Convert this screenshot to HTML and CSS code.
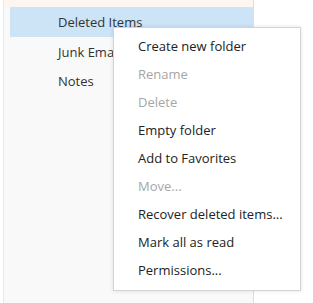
FILE: index.html
```html
<!DOCTYPE html>
<html lang="en">
<head>
    <meta charset="UTF-8">
    <title>Folder menu</title>
    <link rel="stylesheet" href="styles.css">
</head>
<body>
    <div class="page">
        <div class="pane">
            <div class="pane-top"></div>
            <ul class="folders">
                <li class="folder selected">Deleted Items</li>
                <li class="folder">Junk Email</li>
                <li class="folder">Notes</li>
            </ul>
        </div>

        <ul class="menu">
            <li class="menu-item">Create new folder</li>
            <li class="menu-item disabled">Rename</li>
            <li class="menu-item disabled">Delete</li>
            <li class="menu-item">Empty folder</li>
            <li class="menu-item">Add to Favorites</li>
            <li class="menu-item disabled">Move...</li>
            <li class="menu-item">Recover deleted items...</li>
            <li class="menu-item">Mark all as read</li>
            <li class="menu-item">Permissions...</li>
        </ul>
    </div>
</body>
</html>
```

FILE: styles.css
```css
body {
    margin: 0;
    background: #ffffff;
    font-family: 'Open Sans', 'Noto Sans', sans-serif;
    font-size: 13px;
}

.page {
    position: relative;
    height: 303px;
    overflow: hidden;
}

.pane {
    margin-left: 3px;
    width: 243px;
    height: 303px;
    background: #f9f9f9;
    border-left: 1px solid #efe9e4;
    border-right: 1px solid #dedede;
    padding-left: 6px;
}

.pane-top {
    height: 7px;
    background: #fdf6f0;
    margin-left: -6px;
}

.folders {
    list-style: none;
    margin: 0;
    padding: 0;
}

.folder {
    height: 29.5px;
    line-height: 30px;
    padding-left: 48px;
    color: #333333;
    white-space: nowrap;
}

.folder.selected {
    background: #cde4f7;
}

.menu {
    position: absolute;
    left: 113px;
    top: 27px;
    width: 186px;
    height: 254px;
    margin: 0;
    padding: 4px 0 4px 0;
    list-style: none;
    background: #ffffff;
    border: 1px solid #d4d4d4;
    box-shadow: 0 0 4px rgba(0, 0, 0, 0.12);
}

.menu-item {
    height: 28px;
    line-height: 28px;
    padding-left: 24px;
    color: #222222;
    white-space: nowrap;
}

.menu-item.disabled {
    color: #a6a6a6;
}
```
